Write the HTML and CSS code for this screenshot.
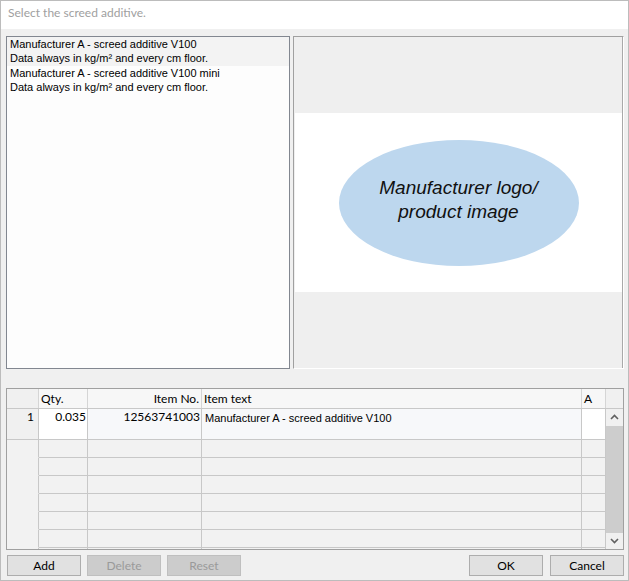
FILE: index.html
```html
<!DOCTYPE html>
<html>
<head>
<meta charset="utf-8">
<link rel="stylesheet" href="styles.css">
</head>
<body>
<div class="window">
  <div class="titlebar">Select the screed additive.</div>
  <div class="content">
    <div class="top">
      <div class="list">
        <div class="item selected">
          <div>Manufacturer A - screed additive V100</div>
          <div>Data always in kg/m² and every cm floor.</div>
        </div>
        <div class="item">
          <div>Manufacturer A - screed additive V100 mini</div>
          <div>Data always in kg/m² and every cm floor.</div>
        </div>
      </div>
      <div class="preview">
        <div class="image">
          <div class="oval">Manufacturer logo/<br>product image</div>
        </div>
      </div>
    </div>
    <div class="grid">
      <div class="grid-head">
        <div class="c c-num h-num"></div>
        <div class="c c-qty">Qty.</div>
        <div class="c c-no right">Item No.</div>
        <div class="c c-text">Item text</div>
        <div class="c c-a">A</div>
        <div class="c c-sb"></div>
      </div>
      <div class="grid-body">
        <div class="rows">
          <div class="row first">
            <div class="c c-num right">1</div>
            <div class="c c-qty right white">0.035</div>
            <div class="c c-no right">12563741003</div>
            <div class="c c-text arial">Manufacturer A - screed additive V100</div>
            <div class="c c-a white"></div>
          </div>
          <div class="row empty"><div class="c c-num"></div><div class="c c-qty"></div><div class="c c-no"></div><div class="c c-text"></div><div class="c c-a"></div></div>
          <div class="row empty"><div class="c c-num"></div><div class="c c-qty"></div><div class="c c-no"></div><div class="c c-text"></div><div class="c c-a"></div></div>
          <div class="row empty"><div class="c c-num"></div><div class="c c-qty"></div><div class="c c-no"></div><div class="c c-text"></div><div class="c c-a"></div></div>
          <div class="row empty"><div class="c c-num"></div><div class="c c-qty"></div><div class="c c-no"></div><div class="c c-text"></div><div class="c c-a"></div></div>
          <div class="row empty"><div class="c c-num"></div><div class="c c-qty"></div><div class="c c-no"></div><div class="c c-text"></div><div class="c c-a"></div></div>
          <div class="row empty"><div class="c c-num"></div><div class="c c-qty"></div><div class="c c-no"></div><div class="c c-text"></div><div class="c c-a"></div></div>
          <div class="row empty"><div class="c c-num"></div><div class="c c-qty"></div><div class="c c-no"></div><div class="c c-text"></div><div class="c c-a"></div></div>
        </div>
        <div class="scrollbar">
          <div class="sb-btn"><svg width="17" height="17" viewBox="0 0 17 17"><polyline points="5,10 8.5,6.5 12,10" fill="none" stroke="#606060" stroke-width="1.6"/></svg></div>
          <div class="thumb"></div>
          <div class="sb-btn"><svg width="17" height="17" viewBox="0 0 17 17"><polyline points="5,7 8.5,10.5 12,7" fill="none" stroke="#606060" stroke-width="1.6"/></svg></div>
        </div>
      </div>
    </div>
    <div class="buttons">
      <div class="btn-group">
        <button class="btn">Add</button>
        <button class="btn disabled">Delete</button>
        <button class="btn disabled">Reset</button>
      </div>
      <div class="btn-group right-group">
        <button class="btn">OK</button>
        <button class="btn">Cancel</button>
      </div>
    </div>
  </div>
</div>
</body>
</html>
```
FILE: styles.css
```css
* { box-sizing: border-box; }
html, body { margin: 0; padding: 0; }
body {
  width: 629px;
  height: 581px;
  font-family: "Segoe UI", Lato, sans-serif;
  font-size: 12px;
  color: #000;
}
.window {
  width: 629px;
  height: 581px;
  border: 1px solid #bcbcbc;
  background: #f0f0f0;
  display: flex;
  flex-direction: column;
}
.titlebar {
  height: 28px;
  background: #fff;
  line-height: 24px;
  padding-left: 7px;
  color: #a0a0a0;
}
.content {
  padding: 7px 4px 0 5px;
  display: flex;
  flex-direction: column;
}
.top {
  display: flex;
  height: 333px;
  gap: 3px;
}
.list {
  width: 284px;
  border: 1px solid #828790;
  background: #fdfdfd;
  font-family: "Liberation Sans", Arial, sans-serif;
  font-size: 11px;
}
.item {
  padding: 0 3px 1px 3px;
  line-height: 14px;
  height: 29px;
}
.item.selected { background: #f3f3f3; }
.preview {
  width: 331px;
  border: 1px solid;
  border-color: #a0a0a0 #fff #fff #a0a0a0;
  box-shadow: inset -1px 0 0 #a9a9a9;
  background: #efefef;
  display: flex;
  flex-direction: column;
  justify-content: center;
}
.image {
  height: 179px;
  margin: 0 1px;
  background: #fff;
  display: flex;
  align-items: center;
  justify-content: center;
}
.oval {
  width: 240px;
  height: 126px;
  border-radius: 50%;
  background: #bdd7ee;
  display: flex;
  align-items: center;
  justify-content: center;
  text-align: center;
  padding-bottom: 5px;
  font-family: "Liberation Sans", Arial, sans-serif;
  font-style: italic;
  font-size: 19px;
  line-height: 24px;
  color: #111;
}
.grid {
  margin-top: 19px;
  width: 618px;
  height: 162px;
  border: 1px solid #a0a0a0;
  background: #f2f2f2;
  display: flex;
  flex-direction: column;
}
.grid-head {
  display: flex;
  height: 20px;
  border-bottom: 1px solid #c8c8c8;
  background: #f7f7f7;
  line-height: 19px;
}
.c {
  flex: none;
  border-right: 1px solid #c8c8c8;
  padding: 0 2px;
  white-space: nowrap;
  overflow: hidden;
}
.grid-head .c { border-right-color: #d5d5d5; }
.c-num { width: 32px; }
.c-qty { width: 49px; }
.c-no { width: 114px; }
.c-text { width: 380px; }
.c-a { width: 24px; }
.c-sb { width: 17px; border-right: none; background: #f0f0f0; }
.h-num { background: #f0f0f0; }
.right { text-align: right; }
.grid-body {
  display: flex;
  height: 140px;
  overflow: hidden;
}
.rows {
  width: 599px;
  display: flex;
  flex-direction: column;
}
.row {
  display: flex;
  flex: none;
}
.row .c { border-bottom: 1px solid #c8c8c8; }
.row.first { height: 31px; background: #f7f8fa; line-height: 14px; }
.row.first .c { padding-top: 1px; }
.row.first .c-num { background: #f0f0f0; padding-right: 4px; }
.row.first .c-no { padding-right: 1px; }
.row.first .c-qty { padding-right: 1px; }
.row.first .arial {
  font-family: "Liberation Sans", Arial, sans-serif;
  font-size: 11px;
  padding-left: 3px;
  padding-top: 2px;
}
.white { background: #fff; }
.row.empty { height: 18px; }
.row.empty .c-num { border-bottom-color: #f2f2f2; }
.scrollbar {
  width: 17px;
  background: #f0f0f0;
  display: flex;
  flex-direction: column;
}
.sb-btn { height: 17px; flex: none; }
.sb-btn svg { display: block; }
.thumb {
  flex: 1;
  background: #cdcdcd;
  margin-bottom: -1px;
}
.buttons {
  margin-top: 5px;
  display: flex;
  justify-content: space-between;
}
.btn-group {
  display: flex;
  gap: 6px;
  padding-left: 1px;
}
.right-group { gap: 7px; padding-left: 0; }
.btn {
  width: 74px;
  height: 21px;
  margin: 0;
  padding: 0;
  border: 1px solid #adadad;
  background: #e1e1e1;
  font-family: "Segoe UI", Lato, sans-serif;
  font-size: 12px;
  line-height: 19px;
  color: #000;
}
.btn.disabled {
  background: #cccccc;
  border-color: #bfbfbf;
  color: #9a9a9a;
}
```
